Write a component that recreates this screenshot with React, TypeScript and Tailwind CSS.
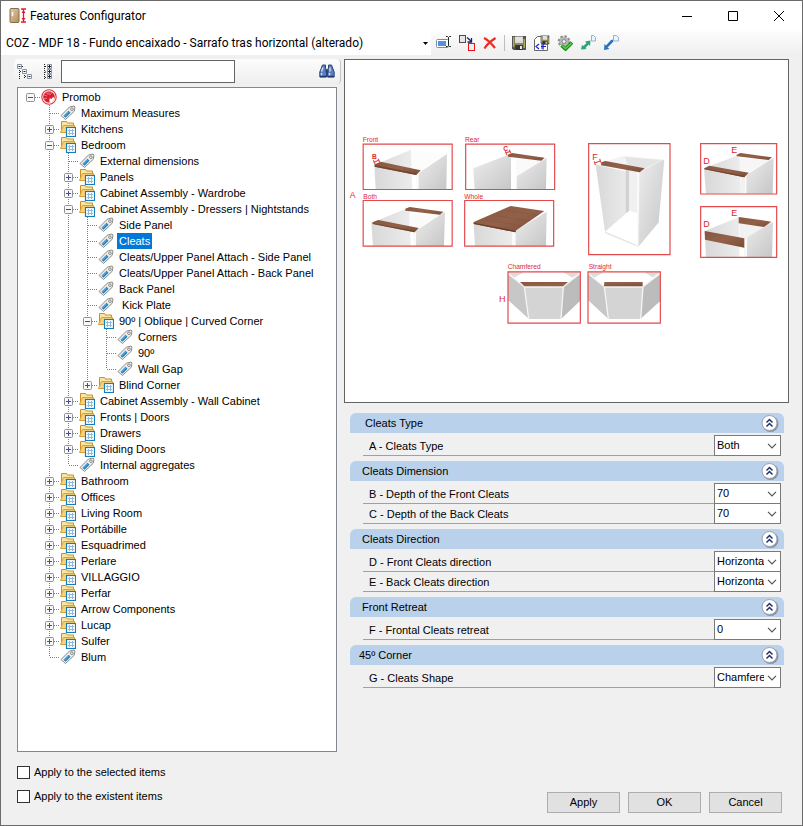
import { useState } from "react";

type TreeItem = {
  label: string;
  kind?: "root" | "folder" | "tag";
  open?: boolean;
  children?: TreeItem[];
};

type Field = { label: string; value: string; options: string[] };
type Group = { title: string; fields: Field[] };

const tree: TreeItem = {
  label: "Promob",
  kind: "root",
  open: true,
  children: [
    { label: "Maximum Measures" },
    { label: "Kitchens", kind: "folder" },
    {
      label: "Bedroom",
      kind: "folder",
      open: true,
      children: [
        { label: "External dimensions" },
        { label: "Panels", kind: "folder" },
        { label: "Cabinet Assembly - Wardrobe", kind: "folder" },
        {
          label: "Cabinet Assembly - Dressers | Nightstands",
          kind: "folder",
          open: true,
          children: [
            { label: "Side Panel" },
            { label: "Cleats" },
            { label: "Cleats/Upper Panel Attach - Side Panel" },
            { label: "Cleats/Upper Panel Attach - Back Panel" },
            { label: "Back Panel" },
            { label: " Kick Plate" },
            {
              label: "90º | Oblique | Curved Corner",
              kind: "folder",
              open: true,
              children: [{ label: "Corners" }, { label: "90º" }, { label: "Wall Gap" }],
            },
            { label: "Blind Corner", kind: "folder" },
          ],
        },
        { label: "Cabinet Assembly - Wall Cabinet", kind: "folder" },
        { label: "Fronts | Doors", kind: "folder" },
        { label: "Drawers", kind: "folder" },
        { label: "Sliding Doors", kind: "folder" },
        { label: "Internal aggregates" },
      ],
    },
    { label: "Bathroom", kind: "folder" },
    { label: "Offices", kind: "folder" },
    { label: "Living Room", kind: "folder" },
    { label: "Portábille", kind: "folder" },
    { label: "Esquadrimed", kind: "folder" },
    { label: "Perlare", kind: "folder" },
    { label: "VILLAGGIO", kind: "folder" },
    { label: "Perfar", kind: "folder" },
    { label: "Arrow Components", kind: "folder" },
    { label: "Lucap", kind: "folder" },
    { label: "Sulfer", kind: "folder" },
    { label: "Blum" },
  ],
};

const groups: Group[] = [
  {
    title: "  Cleats Type",
    fields: [{ label: "A - Cleats Type", value: "Both", options: ["Front", "Rear", "Both", "Whole"] }],
  },
  {
    title: " Cleats Dimension",
    fields: [
      { label: "B - Depth of the Front Cleats", value: "70", options: ["70"] },
      { label: "C - Depth of the Back Cleats", value: "70", options: ["70"] },
    ],
  },
  {
    title: " Cleats Direction",
    fields: [
      { label: "D - Front Cleats direction", value: "Horizontal", options: ["Horizontal", "Vertical"] },
      { label: "E - Back Cleats direction", value: "Horizontal", options: ["Horizontal", "Vertical"] },
    ],
  },
  {
    title: " Front Retreat",
    fields: [{ label: "F - Frontal Cleats retreat", value: "0", options: ["0"] }],
  },
  {
    title: "45º Corner",
    fields: [{ label: "G - Cleats Shape", value: "Chamfered", options: ["Chamfered", "Straight"] }],
  },
];

function RootIcon() {
  return (
    <svg width="16" height="16" viewBox="0 0 16 16">
      <circle cx="8" cy="8" r="7.2" fill="#fff" stroke="#d8323c" strokeWidth="1.1" />
      <circle cx="8" cy="8" r="5.8" fill="#d7202c" />
      <path d="M8.500 14V9.500l2.200.3 1.400-2 1.300 1.700-1.500 3z" fill="#fff" />
      <path d="M5.500 2.500l1 3M3 6l3 1M3 10l3-1M11 3L9 6M8 2.500V6" stroke="#ee9399" strokeWidth=".8" />
    </svg>
  );
}

function TagIcon() {
  return (
    <svg width="16" height="16" viewBox="0 0 16 16">
      <path d="M1 10.500L9.500 2 14 1l1 1-.8 4.300L5.500 14.500z" fill="#ececec" stroke="#8c8c8c" strokeWidth="1" />
      <path d="M3.500 10.800L8.500 5.800l2 2-5 5z" fill="#1b7fc0" />
      <path d="M4.500 11l4.200-4.200" stroke="#7cc4ee" strokeWidth=".9" />
      <circle cx="11.900" cy="4.200" r="1.300" fill="#fff" stroke="#777" strokeWidth=".9" />
    </svg>
  );
}

function FolderIcon() {
  return (
    <svg width="16" height="16" viewBox="0 0 16 16">
      <path d="M1.500 11.500V.5h5l1 1.500h6v4" fill="#fbe3a0" stroke="#c98f2c" />
      <path d="M.5 11.500L3.500 4.500h11v7z" fill="#f8d27a" stroke="#d9a038" />
      <rect x="6.500" y="6.500" width="9" height="9" fill="#fff" stroke="#1580b8" strokeWidth="1.200" />
      <path d="M9.500 8v6M12.500 8v6M8 9.500h6M8 12.500h6" stroke="#8fb9e0" />
    </svg>
  );
}

function Expander({ open, onToggle, label }: { open: boolean; onToggle: () => void; label: string }) {
  return (
    <button type="button" onClick={onToggle} aria-label={`Toggle ${label}`} className="block size-[9px]">
      <svg width="9" height="9" viewBox="0 0 9 9">
        <rect x=".5" y=".5" width="8" height="8" rx="1" fill="#f8f8f8" stroke="#919191" />
        <path d={open ? "M2 4.500h5" : "M2 4.500h5M4.500 2v5"} stroke="#3c4f9c" />
      </svg>
    </button>
  );
}

function Guide({ path }: { path: string }) {
  return (
    <svg width="19" height="16" viewBox="0 0 19 16" className="col-start-1 row-start-1">
      <path d={path} stroke="#808080" strokeDasharray="1 1" fill="none" />
    </svg>
  );
}

type NodeProps = {
  item: TreeItem;
  // one entry per ancestor level, true while that level still has siblings below
  trail: boolean[];
  last: boolean;
  selected: string;
  onSelect: (label: string) => void;
};

function TreeNode({ item, trail, last, selected, onSelect }: NodeProps) {
  const [open, setOpen] = useState(item.open ?? false);
  const isRoot = item.kind === "root";
  const isFolder = item.kind === "folder";
  const stem = isRoot ? "" : last ? "M9.5 0V8" : "M9.5 0V16";

  return (
    <li role="treeitem" aria-selected={selected === item.label}>
      <div className="flex h-4 items-center">
        {trail.map((more, i) => (
          <div key={i} className="grid w-[19px] shrink-0">
            <Guide path={more ? "M9.5 0V16" : ""} />
          </div>
        ))}
        <div className="grid w-[19px] shrink-0 place-items-center">
          <Guide path={`${stem}M10 8.5H19`} />
          {(isRoot || isFolder) && (
            <div className="z-10 col-start-1 row-start-1">
              <Expander open={open} onToggle={() => setOpen(!open)} label={item.label} />
            </div>
          )}
        </div>
        <div className="ml-px w-[19px] shrink-0">{isRoot ? <RootIcon /> : isFolder ? <FolderIcon /> : <TagIcon />}</div>
        <button
          type="button"
          onClick={() => onSelect(item.label)}
          className={
            selected === item.label
              ? "h-4 bg-[#0078d7] px-[2px] leading-4 whitespace-pre text-white"
              : "h-4 px-[2px] leading-4 whitespace-pre"
          }
        >
          {item.label}
        </button>
      </div>
      {open && item.children && (
        <ul role="group">
          {item.children.map((child, i) => (
            <TreeNode
              key={child.label}
              item={child}
              trail={[...trail, !isRoot && !last]}
              last={i === item.children!.length - 1}
              selected={selected}
              onSelect={onSelect}
            />
          ))}
        </ul>
      )}
    </li>
  );
}

function CabinetDiagram() {
  return (
    <svg viewBox="345 60 443 342" className="block h-auto w-full" fontFamily="Liberation Sans, Arial, sans-serif">
      <defs>
        <linearGradient id="panel" x1="0" x2="1" y1="0" y2="0">
          <stop offset="0" stopColor="#d8d8d8" />
          <stop offset="1" stopColor="#ececec" />
        </linearGradient>
        <linearGradient id="side" x1="0" x2="1" y1="0" y2="1">
          <stop offset="0" stopColor="#ededed" />
          <stop offset="1" stopColor="#c6c6c6" />
        </linearGradient>
        <linearGradient id="wood" x1="0" x2="1" y1="0" y2="1">
          <stop offset="0" stopColor="#87573f" />
          <stop offset=".5" stopColor="#93614a" />
          <stop offset="1" stopColor="#7c4d37" />
        </linearGradient>
      </defs>

      {/* A: cleat types */}
      <g transform="translate(340 125) scale(.33333)">
        <path d="M103 120L213 74l4 119H107z" fill="url(#panel)" />
        <path d="M216 78L320 88 232 140l-16-8z" fill="#fcfcfc" />
        <path d="M229 150l8-2v45h-8z" fill="#fafafa" />
        <path d="M236 144L321 87l-2 106h-83z" fill="url(#side)" />
        <path d="M104 118l18-8 120 26-13 14-125-25z" fill="url(#wood)" />
        <path d="M104 120l125 25v5L104 125z" fill="#744631" />

        <path d="M400 130L503 90l10 8 3 95H404z" fill="url(#side)" />
        <path d="M513 102l95 5-73 46-20 5z" fill="#fafafa" />
        <path d="M513 103h16v90h-16z" fill="#fff" />
        <path d="M530 154L620 99l-2 94h-88z" fill="url(#side)" />
        <path d="M503 89l13-5 98 14-10 9-100-12z" fill="url(#wood)" />

        <path d="M94 294L196 252l13 8 3 103H99z" fill="url(#panel)" />
        <path d="M208 266l96 2-76 43-20-4z" fill="#fafafa" />
        <path d="M220 320l8-4v47h-8z" fill="#fafafa" />
        <path d="M228 317L315 260l-3 103h-84z" fill="url(#side)" />
        <path d="M196 251l13-5 101 14-10 9-104-12z" fill="url(#wood)" />
        <path d="M97 292l18-7 121 24-12 13-125-25z" fill="url(#wood)" />
        <path d="M97 294l127 23v5L99 297z" fill="#744631" />

        <path d="M401 298l115 23v42H405z" fill="url(#panel)" />
        <path d="M516 321l12-5v47h-12z" fill="#fafafa" />
        <path d="M527 317L620 260l-2 103h-91z" fill="url(#side)" />
        <path d="M401 291L512 243l101 15-86 59v5L401 297z" fill="url(#wood)" />
        <path d="M440 284l102 18M470 272l100 16M500 257l92 14" stroke="#7f4f39" strokeWidth="1" />
        <path d="M401 293l126 24v5L401 297z" fill="#6c3f2b" />

        <g fill="none" stroke="#e3484b" strokeWidth="3.500">
          <path d="M69.500 57.500h267v136h-267zM377 57.500h267v136H377zM69.500 226.500h267v137h-267zM374 226.500h267v137H374z" />
          <path d="M102 112l14-6M100 106l5 11M114 101l5 10M498 84l12-5M496 79l4 10M508 74l4 10" />
        </g>
        <g fill="#e0282c" fontSize="20">
          <text x="68" y="52">Front</text>
          <text x="375" y="52">Rear</text>
          <text x="70" y="221">Both</text>
          <text x="373" y="221">Whole</text>
          <text x="29" y="220" fontSize="26">A</text>
          <text x="96" y="102" fontWeight="bold">B</text>
          <text x="490" y="77" fontWeight="bold">C</text>
        </g>
      </g>

      {/* D, E, F: direction and retreat */}
      <g transform="translate(570 125) scale(.33333)">
        <path d="M77 119L160 92l122 12-75 36z" fill="#f3f3f3" />
        <path d="M165 96l110 9-72 36-26-8z" fill="#e4e4e4" />
        <path d="M177 125l26 10v130l-26-8z" fill="#f0f0f0" />
        <path d="M77 119l100 22v117l-72 62z" fill="url(#panel)" />
        <path d="M177 130v128l-10 7v-130z" fill="#d2d2d2" />
        <path d="M105 322l98 41 63-73" fill="none" stroke="#e2e2e2" strokeWidth="4" />
        <path d="M206 142L283 103l-17 188-62 76z" fill="url(#side)" />
        <path d="M202 142l6 1-3 224-4-3z" fill="#fafafa" />
        <path d="M94 112l12-4 118 22-15 12-116-21z" fill="url(#wood)" />

        <path d="M402 130l98-38 9 9 3 105H408z" fill="url(#panel)" />
        <path d="M509 101l90 4-70 42-20-6z" fill="#f6f6f6" />
        <path d="M512 152h14v54h-14z" fill="#f1f1f1" />
        <path d="M529 150L611 98l-3 108h-79z" fill="url(#side)" />
        <path d="M499 90l12-6 95 13-10 8-95-11z" fill="url(#wood)" />
        <path d="M403 130l15-8 118 21-13 14-119-24z" fill="url(#wood)" />
        <path d="M403 130l120 22v5l-119-24z" fill="#744631" />

        <path d="M404 318l102-41 3 120H408z" fill="url(#panel)" />
        <path d="M509 296l90 2-75 44-16-8z" fill="#f2f2f2" />
        <path d="M523 342L609 291l-3 106h-83z" fill="url(#side)" />
        <path d="M523 344l8-5v58h-8z" fill="#fafafa" />
        <path d="M506 276l98 14-22 16-76-11z" fill="url(#wood)" />
        <path d="M404 318l119 22v28l-118-24z" fill="url(#wood)" />

        <g fill="none" stroke="#e3484b" strokeWidth="3.500">
          <path d="M56 56h244v333H56zM392 56h228v151H392zM392 245h228v152H392z" />
          <path d="M74 114l17-6M73 109l3 11M89 102l4 11" />
        </g>
        <g fill="#e0282c" fontSize="27">
          <text x="67" y="104">F</text>
          <text x="484" y="83">E</text>
          <text x="400" y="118">D</text>
          <text x="484" y="272">E</text>
          <text x="400" y="307">D</text>
        </g>
      </g>

      {/* H: corner shapes */}
      <g transform="translate(480 250) scale(.33333)">
        <path d="M84 67h47l-29 16zM251 67h49v1l-23 15zM324 67h47l-29 16zM493 67h48l-23 15z" fill="#dcdcdc" />
        <path d="M84 72l49 38 14 97-63-57zM324 72l49 38 12 97-61-57z" fill="#c7c7c7" />
        <path d="M300 72l-50 38-7 97 57-54zM541 72l-52 38-8 97 60-54z" fill="#bcbcbc" />
        <path d="M133 110h117l-7 97h-97zM372 110h117l-7 97h-97z" fill="#d4d4d4" />
        <path d="M84 70l49 40 13 97M300 70l-50 40-7 97M133 111h117M324 70l49 40 12 97M541 70l-52 40-7 97M373 111h116" fill="none" stroke="#f4f4f4" strokeWidth="4" />
        <path d="M120 96h144l-15 13H133zM373 96h115v13H372z" fill="url(#wood)" />
        <path d="M84 65.500h217v154H84zM324 65.500h217v154H324z" fill="none" stroke="#e3484b" strokeWidth="3.500" />
        <g fill="#e0282c" fontSize="20">
          <text x="83" y="58">Chamfered</text>
          <text x="326" y="58">Straight</text>
          <text x="57" y="157" fontSize="27">H</text>
        </g>
      </g>
    </svg>
  );
}

function AppIcon() {
  return (
    <svg width="17" height="16" viewBox="0 0 17 16">
      <defs>
        <linearGradient id="door" x1="0" x2="1" y1="0" y2="1">
          <stop offset="0" stopColor="#e2cda6" />
          <stop offset="1" stopColor="#b08d63" />
        </linearGradient>
      </defs>
      <rect x="1" y=".5" width="9" height="14" rx="1" fill="url(#door)" stroke="#8b6b47" />
      <path d="M3.500 4v4" stroke="#fff" strokeWidth="1.400" />
      <path d="M12 1h5M12 14h5M14.500 1.500v12" stroke="#e01b2c" strokeWidth="1.300" fill="none" />
      <path d="M14.500 2l2 3h-4zM14.500 13l2-3h-4z" fill="#e01b2c" />
    </svg>
  );
}

function FloppyShape() {
  return (
    <>
      <path d="M1 1h14v14H2.500L1 13.500z" fill="#55554b" />
      <path d="M2 2h1.500v10H2zM12.500 4H14v9h-1.500z" fill="#b3aa62" />
      <path d="M4 1.500h8v6.500H4z" fill="#d7d7d7" />
      <path d="M5 3h6M5 5h6" stroke="#eee" />
      <path d="M3.500 8h9v2h-9z" fill="#8f8a5c" />
      <path d="M4.500 10h7v5h-7z" fill="#333" />
      <path d="M9 11h2v3H9z" fill="#e6e6e6" />
    </>
  );
}

const toolbarIcons = {
  rename: (
    <>
      <rect x=".5" y="4.500" width="12" height="8" rx="1" fill="#fff" stroke="#7d8ba3" />
      <rect x="2" y="6" width="8" height="5" fill="#5490e0" />
      <path d="M10 1.500h1.500l1 1 1-1H15M12.500 2.500v8M10 11.500h1.500l1-1 1 1H15" stroke="#222" fill="none" />
    </>
  ),
  replace: (
    <>
      <rect x=".5" y=".5" width="6" height="7" fill="#e6e6e6" stroke="#5e4248" />
      <rect x="9.500" y="8.500" width="6" height="7" fill="#e8f0f4" stroke="#e11" />
      <path d="M8 2.500l4 3.500M12.500 3v4h-4" stroke="#15226e" fill="none" strokeWidth="1.300" />
    </>
  ),
  remove: <path d="M2 3c4 2 7 5 11 10M13.500 3C9 6 5 9 2.500 13.500" stroke="#ef2b23" strokeWidth="2.200" fill="none" />,
  save: <FloppyShape />,
  saveAs: (
    <>
      <path d="M.5 4.500l3-3H9v14H.5zM9 9h4.500v6.500H4" fill="#fff" stroke="#666" />
      <g transform="translate(6 0) scale(.62)">
        <FloppyShape />
      </g>
      <path d="M5 9L2 11.500 5 14M7 10h3M7 13h3M7 11.500h5" stroke="#1a22d0" strokeWidth="1.200" fill="none" />
    </>
  ),
  apply: (
    <>
      <circle cx="7" cy="6.500" r="5" fill="#bdbdbd" stroke="#8b8b8b" strokeWidth="2.500" strokeDasharray="2.200 1.700" />
      <circle cx="7" cy="6.500" r="4.500" fill="#b7b7b7" />
      <circle cx="7" cy="6.500" r="2" fill="#eee" stroke="#888" />
      <path d="M4.500 10.500l4 3.500L15 7.500" stroke="#1b8d1b" strokeWidth="3.600" fill="none" />
      <path d="M5 10.500l3.500 3L14.500 8" stroke="#5bd04b" strokeWidth="1.500" fill="none" />
    </>
  ),
  exportItem: (
    <>
      <path d="M1 14.500l1-4.500 1.500 1 3-3L5 6.500l5.500-1-.5 5.500-1.500-1.500-3 3.500 1 1z" fill="#2ba37c" />
      <path d="M11.500.5h2l2 2v3.500h-4z" fill="#edf4fb" stroke="#8fb1d4" />
    </>
  ),
  importItem: (
    <>
      <path d="M1 15l.5-6L3 10.500 8 5l2.500-.5L10 7l-5.500 5.500L6.500 14z" fill="#2b72c4" />
      <path d="M10.500.5h3l2 2v3.500h-5z" fill="#edf4fb" stroke="#8fb1d4" />
    </>
  ),
};

function ToolButton({ name, label }: { name: keyof typeof toolbarIcons; label: string }) {
  return (
    <button type="button" aria-label={label} title={label} className="flex w-[23px] justify-center">
      <svg width="16" height="16" viewBox="0 0 16 16">
        {toolbarIcons[name]}
      </svg>
    </button>
  );
}

function PropertyGroup({ group }: { group: Group }) {
  const [open, setOpen] = useState(true);

  return (
    <section className="mb-[5px]">
      <div className="flex h-5 items-center justify-between rounded-t-md bg-[#b9d1ea] pr-[5px] pl-[9px]">
        <h2 className="whitespace-pre">{group.title}</h2>
        <button type="button" onClick={() => setOpen(!open)} aria-label={`Toggle ${group.title.trim()}`}>
          <svg width="18" height="18" viewBox="0 0 18 18">
            <circle cx="9.500" cy="10" r="8" fill="#8c9099" />
            <circle cx="8.500" cy="9" r="7.500" fill="#fff" stroke="#9aa2b4" />
            <path d="M5.500 8.500l3-3 3 3M5.500 12.500l3-3 3 3" fill="none" stroke="#1f3570" strokeWidth="1.500" />
          </svg>
        </button>
      </div>
      {open && (
        <div className="pt-[3px] pr-[3px] pl-[13px]">
          {group.fields.map((field) => (
            <PropertyRow key={field.label} field={field} />
          ))}
        </div>
      )}
    </section>
  );
}

function PropertyRow({ field }: { field: Field }) {
  const [value, setValue] = useState(field.value);

  return (
    <div className="flex h-5 items-end">
      <label htmlFor={field.label} className="h-5 flex-1 border-b border-[#a0a0a0] pl-[6px] leading-5">
        {field.label}
      </label>
      <div className="grid w-[67px] shrink-0 items-center">
        <select
          id={field.label}
          value={value}
          onChange={(e) => setValue(e.target.value)}
          className="col-start-1 row-start-1 h-[21px] w-full appearance-none border border-[#7a7a7a] bg-white pr-4 pl-[2px]"
        >
          {field.options.map((option) => (
            <option key={option}>{option}</option>
          ))}
        </select>
        <svg width="10" height="6" viewBox="0 0 10 6" className="pointer-events-none col-start-1 row-start-1 mr-1 justify-self-end">
          <path d="M1 .8l4 4 4-4" fill="none" stroke="#555" strokeWidth="1.200" />
        </svg>
      </div>
    </div>
  );
}

function CheckOption({ label }: { label: string }) {
  return (
    <label className="flex h-6 items-center gap-1">
      <input type="checkbox" className="size-[13px] appearance-none border border-[#333] bg-white checked:bg-[#0078d7]" />
      {label}
    </label>
  );
}

export default function App() {
  const [selected, setSelected] = useState("Cleats");
  const [filter, setFilter] = useState("");

  return (
    <div className="flex min-h-screen flex-col border border-[#6b6b6b] bg-[#f0f0f0] font-['Liberation_Sans',Arial,sans-serif] text-[11px] text-black">
      <header className="flex h-[30px] items-center bg-white pr-px pl-2 font-[Roboto,sans-serif] text-[12px]">
        <AppIcon />
        <h1 className="ml-1 flex-1">Features Configurator</h1>
        <button type="button" aria-label="Minimize" className="flex w-[46px] justify-center">
          <svg width="10" height="10" viewBox="0 0 10 10">
            <path d="M0 5.500h10" stroke="#000" />
          </svg>
        </button>
        <button type="button" aria-label="Maximize" className="flex w-[46px] justify-center">
          <svg width="10" height="10" viewBox="0 0 10 10">
            <path d="M.5.5h9v9h-9z" fill="none" stroke="#000" />
          </svg>
        </button>
        <button type="button" aria-label="Close" className="flex w-[45px] justify-center">
          <svg width="10" height="10" viewBox="0 0 10 10">
            <path d="M0 0l10 10M10 0L0 10" stroke="#000" />
          </svg>
        </button>
      </header>

      <div className="flex h-6 items-center bg-linear-to-b from-[#fdfdfd] to-[#efefef]">
        <div className="grid h-6 w-[430px] items-center bg-white font-[Roboto,sans-serif] text-[12px]">
          <select
            aria-label="Configuration"
            className="col-start-1 row-start-1 h-6 w-full appearance-none pr-4 pl-[5px]"
            defaultValue="COZ - MDF 18 - Fundo encaixado - Sarrafo tras horizontal (alterado)"
          >
            <option>COZ - MDF 18 - Fundo encaixado - Sarrafo tras horizontal (alterado)</option>
          </select>
          <svg width="5" height="3" viewBox="0 0 5 3" className="pointer-events-none col-start-1 row-start-1 mr-[3px] justify-self-end">
            <path d="M0 0h5L2.500 3z" fill="#000" />
          </svg>
        </div>
        <div className="flex items-center pl-px">
          <ToolButton name="rename" label="Rename" />
          <ToolButton name="replace" label="Replace" />
          <ToolButton name="remove" label="Delete" />
          <div className="mr-[2px] ml-[3px] h-4 w-px bg-[#bdbdbd]" />
          <ToolButton name="save" label="Save" />
          <ToolButton name="saveAs" label="Save as" />
          <ToolButton name="apply" label="Apply settings" />
          <ToolButton name="exportItem" label="Export" />
          <ToolButton name="importItem" label="Import" />
        </div>
      </div>

      <main className="flex flex-1 pt-1">
        <div className="flex w-[340px] shrink-0 flex-col pl-[13px]">
          <div className="flex h-[25px] items-center rounded-sm border-r border-[#c4c4c4] bg-linear-to-b from-[#fcfcfc] to-[#efefef] pr-[5px] pl-[3px]">
            <button type="button" aria-label="Collapse all">
              <svg width="16" height="16" viewBox="0 0 16 16">
                <path d="M2.500 6v9M3 7.500h3M7.500 9v6M8 12.500h3M3 2.500h3" stroke="#222" strokeDasharray="1 1" fill="none" />
                <path d="M.5.500h4v4h-4zM5.500 5.500h4v4h-4zM10.500 10.500h4v4h-4z" fill="#fff" stroke="#8794a5" />
                <path d="M1.500 2.500h2M6.500 7.500h2M11.500 12.500h2" stroke="#222" />
              </svg>
            </button>
            <button type="button" aria-label="Expand all" className="ml-[10px]">
              <svg width="10" height="16" viewBox="0 0 10 16">
                <path d="M1.500 0v16M2 2.500h2M2 8h2M2 13.500h2" stroke="#222" strokeDasharray="1 1" fill="none" />
                <path d="M4.500.500h4v4h-4zM4.500 5.500h4v4h-4zM4.500 10.500h4v4h-4z" fill="#fff" stroke="#8794a5" />
                <path d="M5 2.500h3M6.500 1v3M5 7.500h3M6.500 6v3M5 12.500h3M6.500 11v3" stroke="#222" />
              </svg>
            </button>
            <input
              type="text"
              aria-label="Search"
              value={filter}
              onChange={(e) => setFilter(e.target.value)}
              className="ml-2 h-[23px] w-[174px] border border-[#646464] bg-white px-1 outline-none"
            />
            <button type="button" aria-label="Find" className="ml-auto">
              <svg width="16" height="15" viewBox="0 0 16 15">
                <path d="M3.500 1h3v3l1 2v7H.8V8zM9.500 1h3l2.700 7v5H8.500V6l1-2z" fill="#5b7fbf" stroke="#2c477f" />
                <path d="M6.500 5.500h3v3h-3z" fill="#2c477f" />
                <path d="M2.500 7.500l1.500-4M11 7.500V3.500M2.500 9v2.500M10.500 9v2.500" stroke="#d5e2f6" strokeWidth="1.400" />
                <path d="M1 12.500h6M9 12.500h6" stroke="#24386b" strokeWidth="1.500" />
              </svg>
            </button>
          </div>
          <nav className="mt-[3px] mr-1 ml-[3px] flex-1 border border-[#828790] bg-white pt-[1px] pl-[3px]">
            <ul role="tree">
              <TreeNode item={tree} trail={[]} last selected={selected} onSelect={setSelected} />
            </ul>
          </nav>
        </div>

        <div className="min-w-0 flex-1 pr-[13px] pl-[3px]">
          <div className="border border-[#646464] bg-white">
            <CabinetDiagram />
          </div>
          <div className="mt-[10px] mr-[5px] ml-[6px]">
            {groups.map((group) => (
              <PropertyGroup key={group.title} group={group} />
            ))}
          </div>
        </div>
      </main>

      <footer className="flex justify-between pt-2 pr-5 pb-3 pl-4">
        <div className="pb-[5px]">
          <CheckOption label="Apply to the selected items" />
          <CheckOption label="Apply to the existent items" />
        </div>
        <div className="flex items-end gap-2">
          <button type="button" className="h-[21px] w-[73px] border border-[#adadad] bg-[#e1e1e1]">
            Apply
          </button>
          <button type="button" className="h-[21px] w-[73px] border border-[#adadad] bg-[#e1e1e1]">
            OK
          </button>
          <button type="button" className="h-[21px] w-[73px] border border-[#adadad] bg-[#e1e1e1]">
            Cancel
          </button>
        </div>
      </footer>
    </div>
  );
}
